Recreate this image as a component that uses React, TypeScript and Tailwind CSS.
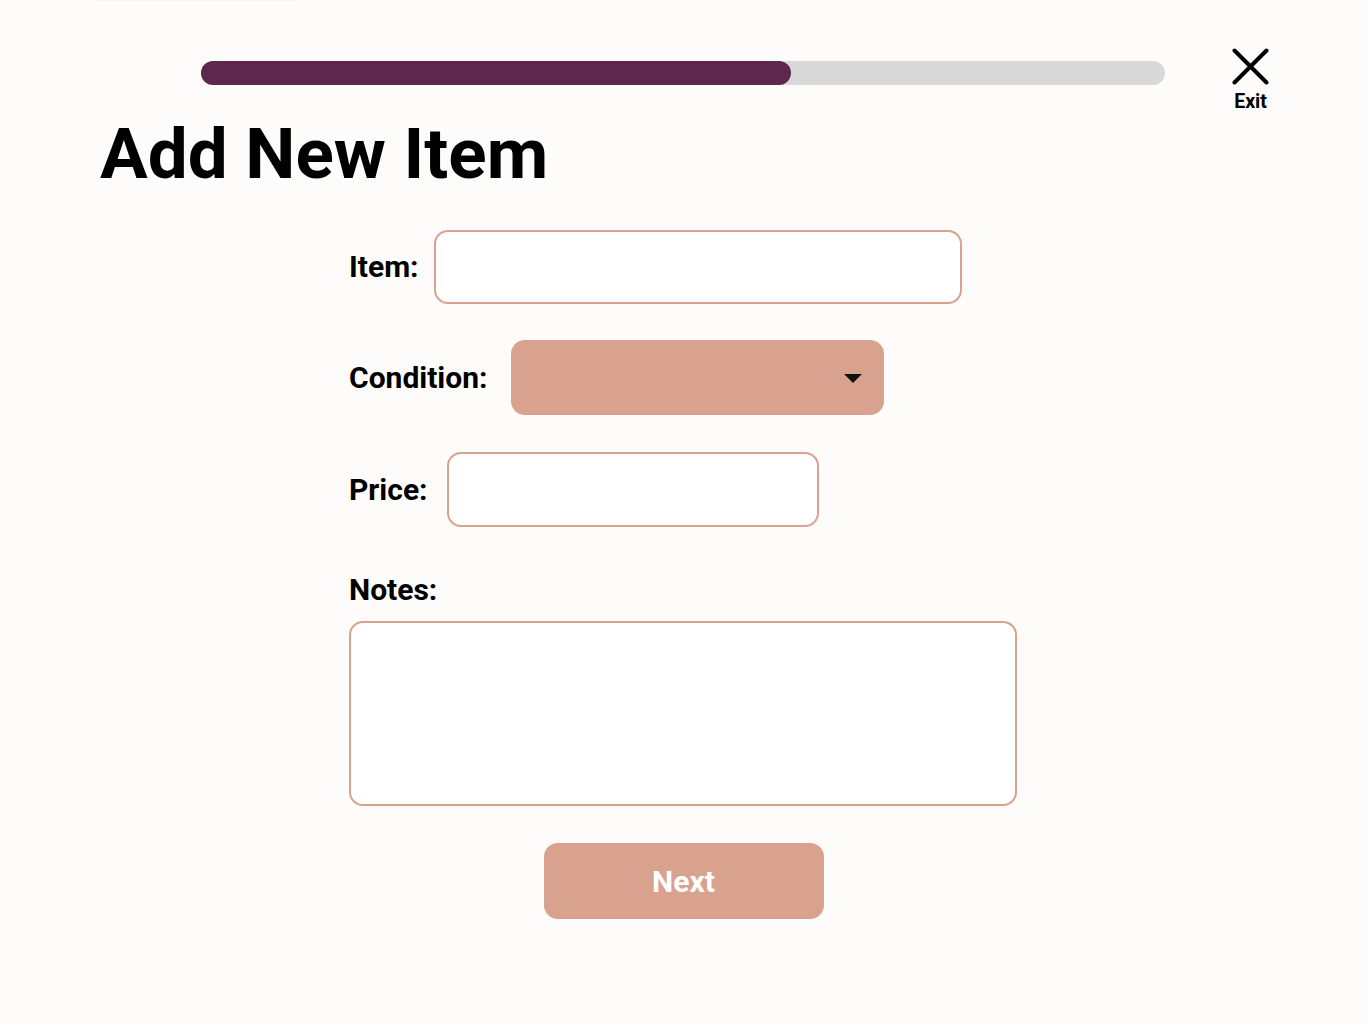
import React from "react";

export default function App() {
  return (
    <div
      className="min-h-[1025px] w-full bg-[#fdfcfb] text-black"
      style={{ fontFamily: "Roboto, 'Liberation Sans', sans-serif" }}
    >
      <div className="ml-[100px] h-px w-[198px] border-t border-dotted border-[#ecebea]" />
      {/* Header */}
      <div className="flex items-start">
        <div className="ml-[201px] mt-[60px] h-[24px] w-[964px] rounded-full bg-[#d9d9d9]">
          <div className="h-full w-[590px] rounded-full bg-[#5e274c]" />
        </div>
        <button className="ml-[67px] mt-[47px] flex flex-col items-center">
          <svg width="37" height="37" viewBox="0 0 37 37" fill="none">
            <path d="M2.5 2.5 L34.5 34.5 M34.5 2.5 L2.5 34.5" stroke="#000" strokeWidth="4" strokeLinecap="round" />
          </svg>
          <span className="mt-[7px] text-[19.5px] font-bold leading-[20px]">Exit</span>
        </button>
      </div>

      <h1 className="ml-[100px] mt-[6px] text-[71px] font-bold leading-[72px]">Add New Item</h1>

      <div className="mx-auto mt-[40px] flex w-[669px] flex-col">
        <div className="flex items-center">
          <label className="text-[30px] font-bold leading-none">Item:</label>
          <input className="ml-[15px] h-[74px] w-[528px] rounded-[14px] border-2 border-[#d9a28f] bg-white outline-none" />
        </div>

        <div className="mt-[36px] flex items-center">
          <label className="text-[30px] font-bold leading-none">Condition:</label>
          <div className="relative ml-[23px] h-[75px] w-[373px] rounded-[14px] bg-[#d9a28f]">
            <svg className="absolute left-[333px] top-[34px]" width="18" height="9" viewBox="0 0 18 9">
              <path d="M0 0 H18 L9 9 Z" fill="#111" />
            </svg>
          </div>
        </div>

        <div className="mt-[37px] flex items-center">
          <label className="text-[30px] font-bold leading-none">Price:</label>
          <input className="ml-[19px] h-[75px] w-[372px] rounded-[14px] border-2 border-[#d9a28f] bg-white outline-none" />
        </div>

        <label className="mt-[48px] text-[30px] font-bold leading-none">Notes:</label>
        <textarea className="mt-[16px] h-[185px] w-[668px] resize-none rounded-[14px] border-2 border-[#d9a28f] bg-white outline-none" />

        <button className="mx-auto mt-[37px] flex h-[76px] w-[280px] items-center justify-center rounded-[14px] bg-[#d9a28f] text-[30px] font-bold text-white">
          Next
        </button>
      </div>
    </div>
  );
}
